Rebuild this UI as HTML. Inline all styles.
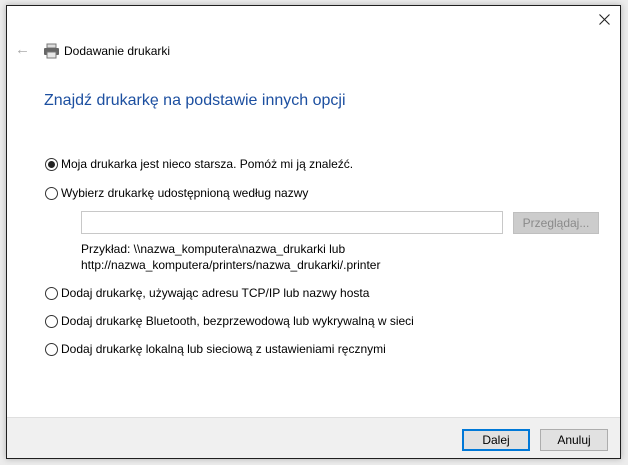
<!DOCTYPE html><html><head><meta charset="utf-8"><style>
body{margin:0;width:628px;height:465px;background:#ececec;position:relative;overflow:hidden;font-family:"Liberation Sans",sans-serif;font-size:12px;color:#000}
.win{position:absolute;left:6px;top:5px;width:613px;height:452px;background:#fff;border:1px solid #1f1f1f;box-shadow:0 0 6px rgba(0,0,0,.25)}
.a{position:absolute;white-space:nowrap}
.foot{position:absolute;left:0;right:0;top:411px;bottom:0;background:#f0f0f0;border-top:1px solid #dfdfdf}
.btn{position:absolute;height:20px;border:1px solid #adadad;background:#e1e1e1;text-align:center;line-height:20px;box-sizing:border-box}
.r{position:absolute;width:13px;height:13px;border:1px solid #333;border-radius:50%;box-sizing:border-box;background:#fff}
</style></head><body>
<div class="win">
<svg class="a" style="left:592px;top:8px" width="11" height="11" viewBox="0 0 11 11"><path d="M0.5 0.5L10.5 10.5M10.5 0.5L0.5 10.5" stroke="#222" stroke-width="1.1"/></svg>
<div class="a" style="left:8px;top:35px;color:#aaa;font-size:15px">←</div>
<svg class="a" style="left:36px;top:37px" width="18" height="16" viewBox="0 0 18 16"><rect x="4" y="1" width="9" height="4" fill="#ddd" stroke="#777"/><rect x="1" y="5" width="15" height="7" rx="1" fill="#666"/><rect x="4" y="9" width="9" height="6" fill="#e8e8e8" stroke="#777"/></svg>
<div class="a" style="left:57px;top:38px;font-size:12px">Dodawanie drukarki</div>
<div class="a" style="left:37px;top:86px;font-size:16px;color:#1c4fa0">Znajdź drukarkę na podstawie innych opcji</div>
<div class="r" style="left:38px;top:152px"><div style="width:7px;height:7px;background:#222;border-radius:50%;margin:2px"></div></div>
<div class="a" style="left:54px;top:151px">Moja drukarka jest nieco starsza. Pomóż mi ją znaleźć.</div>
<div class="r" style="left:38px;top:181px"></div>
<div class="a" style="left:54px;top:180px">Wybierz drukarkę udostępnioną według nazwy</div>
<div class="a" style="left:74px;top:205px;width:422px;height:23px;border:1px solid #c8c8c8;box-sizing:border-box"></div>
<div class="btn" style="left:506px;top:206px;width:86px;height:22px;line-height:20px;color:#8a8a8a;background:#cccccc;border-color:#bfbfbf">Przeglądaj...</div>
<div class="a" style="left:74px;top:236px">Przykład: \\nazwa_komputera\nazwa_drukarki lub</div>
<div class="a" style="left:74px;top:252px">http://nazwa_komputera/printers/nazwa_drukarki/.printer</div>
<div class="r" style="left:38px;top:281px"></div>
<div class="a" style="left:54px;top:280px">Dodaj drukarkę, używając adresu TCP/IP lub nazwy hosta</div>
<div class="r" style="left:38px;top:309px"></div>
<div class="a" style="left:54px;top:308px">Dodaj drukarkę Bluetooth, bezprzewodową lub wykrywalną w sieci</div>
<div class="r" style="left:38px;top:337px"></div>
<div class="a" style="left:54px;top:336px">Dodaj drukarkę lokalną lub sieciową z ustawieniami ręcznymi</div>
<div class="foot">
<div class="btn" style="left:455px;top:11px;width:68px;height:22px;border:2px solid #0078d7;line-height:18px">Dalej</div>
<div class="btn" style="left:533px;top:11px;width:68px;height:22px">Anuluj</div>
</div>
</div>
</body></html>
